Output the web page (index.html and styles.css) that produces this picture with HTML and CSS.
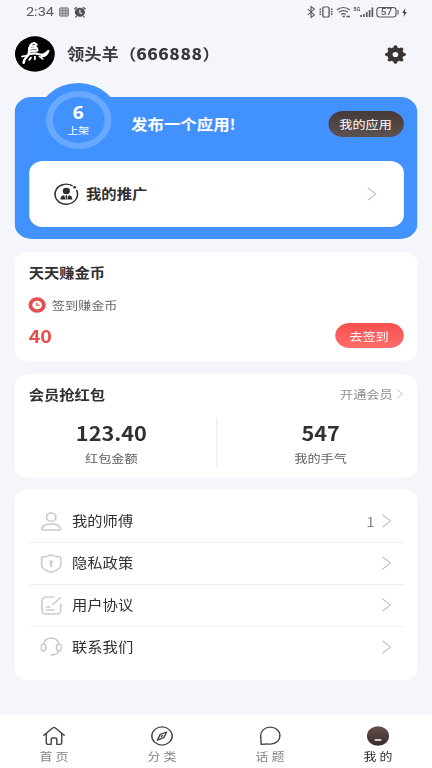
FILE: index.html
```html
<!DOCTYPE html>
<html lang="zh-CN">
<head>
<meta charset="utf-8">
<title>我的</title>
<link rel="stylesheet" href="styles.css">
</head>
<body>
<svg class="defs" width="0" height="0">
  <symbol id="chevron" viewBox="0 0 9 14"><path d="M1 .8 8 7l-7 6.200" fill="none" stroke="currentColor" stroke-width="1"/></symbol>
</svg>
<div class="app">
  <header class="status">
    <span class="time">2:34</span>
    <svg class="status-left" viewBox="0 0 25 12" width="25" height="12">
      <rect x=".8" y="1.800" width="8" height="8.400" rx="1" fill="#b4b5b9" stroke="#77787c" stroke-width=".8"/>
      <path d="M1 4.500h8M1 7.300h8M3.600 2v8M6.300 2v8" stroke="#77787c" stroke-width=".6"/>
      <circle cx="19" cy="6.300" r="4.500" fill="#515256"/>
      <path d="M14 3.200 16.200 1.200M24 3.200l-2.200-2M16 10.200l-1 1.300M22 10.200l1 1.300" stroke="#515256" stroke-width="1.200"/>
      <path d="M19 3.800v2.800l1.800 1.100" fill="none" stroke="#f4f6fb" stroke-width="1"/>
    </svg>
    <svg class="status-right" viewBox="0 0 90 14" width="90" height="14" fill="none" stroke="#58595d">
      <path d="m1.500 4 6 6L4.500 12.500V1.500l3 2.500-6 6" stroke-width="1"/>
      <rect x="15" y="2" width="5.500" height="10" rx="1" stroke-width="1.200"/>
      <path d="M12.700 3.500v7M22.800 3.500v7" stroke-width="1.400" stroke-dasharray="1.500 1"/>
      <path d="M27.500 5c3.500-3.200 8-3.200 11.500 0M29.300 7.300c2.500-2 5.400-2 7.900 0M31.200 9.500c1.300-1 3-1 4.200 0" stroke-width="1.200"/>
      <path d="M32.500 11.500h2M36 11.500h3" stroke-width="1.400"/>
      <path d="M49 12v-2M51.500 12V9M54 12V7M56.500 12V5M59 12V2.500" stroke-width="1.500"/>
      <text x="42" y="6" class="sig">5G</text>
      <rect x="63" y="2.500" width="17" height="9.500" rx="2.500" stroke-width="1"/>
      <path d="M81.800 5v4.500" stroke-width="1"/>
      <text x="71.500" y="10.400" text-anchor="middle" class="bat">57</text>
      <path d="m88.500 3-3 5h1.800L86.500 12l3.200-5h-1.800z" fill="#414246" stroke="none"/>
    </svg>
  </header>

  <div class="profile">
    <svg class="avatar" viewBox="0 0 36 36" width="36" height="36">
      <circle cx="18" cy="18" r="17.700" fill="#000"/>
      <g fill="none" stroke="#fff" stroke-linecap="round" stroke-linejoin="round">
        <path d="M13.500 12c0-3 1.500-4.500 4-5l2 1.500-1.500 3 2 1M14 10.500l4-.5M13.500 13l6-1M13.500 15.500l7-1" stroke-width="2"/>
        <path d="M13 12c0 3 .5 5-1.500 8-2 2-3.500 4-3.500 7M12 18.500c4-1 6-2 9-.5 4 1.500 6 0 9-3-1 3-3 5.500-6 5.500" stroke-width="2.200"/>
        <path d="M6.500 20.500c2-.3 4-.5 6-1.500M14.500 21.500l-1.500 2.500M18 20.500v3M22 20.500l3 2.500" stroke-width="1.600"/>
      </g>
    </svg>
    <h1>领头羊（<b>666888</b>）</h1>
    <svg class="gear" viewBox="0 0 20 20" width="19" height="19">
      <circle cx="10" cy="10" r="5.200" fill="none" stroke="#3c3432" stroke-width="5"/>
      <path d="M10 2.100v.1M10 17.800v.1M2.100 10h.1M17.800 10h.1M4.500 4.500h.1M15.500 4.500h.1M4.500 15.500h.1M15.500 15.500h.1" stroke="#3c3432" stroke-width="3.800" stroke-linecap="round"/>
    </svg>
  </div>

  <section class="hero">
    <div class="badge"><div class="ring"><strong>6</strong><span>上架</span></div></div>
    <div class="hero-top">
      <h2>发布一个应用!</h2>
      <button class="btn dark">我的应用</button>
    </div>
    <div class="promo">
      <svg viewBox="0 0 22 22" width="22" height="22">
        <path d="M16 2.600A10 10 0 1 0 20.200 7.500" fill="none" stroke="#2e2e2e" stroke-width="1.400" stroke-linecap="round"/>
        <circle cx="18.300" cy="4.300" r="1.200" fill="#2e2e2e"/>
        <circle cx="11" cy="8" r="3.200" fill="#2e2e2e"/>
        <path d="M5.600 16.500c0-3 1.700-4.200 3.400-4.300l1.200 4.300zM16.400 16.500c0-3-1.700-4.200-3.400-4.300l-1.200 4.300zM11 12l.9 1-.4 3.500h-1l-.4-3.500z" fill="#2e2e2e"/>
      </svg>
      <span>我的推广</span>
      <svg class="chev" width="9" height="14"><use href="#chevron"/></svg>
    </div>
  </section>

  <section class="card coins">
    <h3>天天赚金币</h3>
    <div class="task">
      <svg viewBox="0 0 16 16" width="16" height="16">
        <circle cx="8" cy="8" r="6" fill="#fff" stroke="#e4504f" stroke-width="3.400"/>
        <path d="M7.700 5.400v2.800h2.600" fill="none" stroke="#e4504f" stroke-width="1.100"/>
      </svg>
      <span>签到赚金币</span>
    </div>
    <div class="coin-row"><strong>40</strong><button class="btn red">去签到</button></div>
  </section>

  <section class="card member">
    <div class="member-head"><h3>会员抢红包</h3><span class="more">开通会员<svg width="6.500" height="10"><use href="#chevron"/></svg></span></div>
    <div class="stats">
      <div class="stat"><strong>123.40</strong><span>红包金额</span></div>
      <div class="stat"><strong>547</strong><span>我的手气</span></div>
    </div>
  </section>

  <section class="card menu">
    <div class="row">
      <svg class="icon" viewBox="0 0 20 20"><circle cx="10" cy="5.400" r="4.400"/><path d="M2.800 19h14.400c1.200 0 1.800-.6 1.600-1.700C18.200 14.500 14.500 12.700 10 12.700S1.800 14.500 1.200 17.300C1 18.400 1.600 19 2.800 19z"/></svg>
      <span>我的师傅</span><em>1</em><svg class="chev" width="9" height="14"><use href="#chevron"/></svg>
    </div>
    <div class="row">
      <svg class="icon" viewBox="0 0 20 20"><path d="M10 .9C7.500 2.200 4.500 3 1.800 3.100c-.6 0-.8.3-.8.900v7c0 4 5 7 9 8.300 4-1.300 9-4.300 9-8.300V4c0-.6-.2-.9-.8-.9C15.500 3 12.500 2.200 10 .9z"/><path d="M10 8v5M9 7.700h2" stroke-width="1.800"/></svg>
      <span>隐私政策</span><svg class="chev" width="9" height="14"><use href="#chevron"/></svg>
    </div>
    <div class="row">
      <svg class="icon" viewBox="0 0 20 20"><path d="M12.500 1.200H5a3.600 3.600 0 0 0-3.600 3.600v10.500A3.600 3.600 0 0 0 5 18.900h10.300a3.600 3.600 0 0 0 3.600-3.600V9M18.600 1.800 11.300 9M5.700 11.500h3M5.700 14.800h7"/></svg>
      <span>用户协议</span><svg class="chev" width="9" height="14"><use href="#chevron"/></svg>
    </div>
    <div class="row">
      <svg class="icon" viewBox="0 0 20 20"><path d="M2.800 7.500C3.500 3.500 6.500 1 10 1s6.500 2.500 7.200 6.500M17.200 14.500c-.8 2.600-2.700 4-5.700 4.200"/><rect x=".5" y="7.500" width="4.500" height="7" rx="2.200"/><rect x="15" y="7.500" width="4.500" height="7" rx="2.200"/><path d="M10.500 18.700h1" stroke-width="2"/></svg>
      <span>联系我们</span><svg class="chev" width="9" height="14"><use href="#chevron"/></svg>
    </div>
  </section>

  <nav class="tabs">
    <a><svg viewBox="0 0 21 21"><path d="M1 9.700 9.200 2c.8-.8 1.800-.8 2.600 0L20 9.700M3.300 8v9.300c0 1.200.8 2 2 2h2.600v-5.500c0-.8.4-1.200 1.100-1.200h3c.7 0 1.100.4 1.100 1.200v5.500h2.600c1.200 0 2-.8 2-2V8"/></svg><span>首 页</span></a>
    <a><svg viewBox="0 0 21 21"><circle cx="10.500" cy="10.500" r="9.500"/><path d="m14.800 6.300-2.600 6-6 2.600 2.600-6z"/><path d="m10 11 1-1"/></svg><span>分 类</span></a>
    <a><svg viewBox="0 0 21 21"><path d="M2.300 19.300 1.800 10.200A9 9 0 1 1 11 19.100Q7 18.600 2.300 19.300z"/></svg><span>话 题</span></a>
    <a class="active"><svg viewBox="0 0 21 21"><defs><linearGradient id="me" x2="0" y2="1"><stop stop-color="#65514f"/><stop offset="1" stop-color="#382b2b"/></linearGradient></defs><circle cx="10.500" cy="10.500" r="10.300" fill="url(#me)" stroke="none"/><path d="M8 14.700h5" stroke="#fff" stroke-width="1.700"/></svg><span>我 的</span></a>
  </nav>
</div>
</body>
</html>
```
FILE: styles.css
```css
* { box-sizing: border-box; }
html, body { margin: 0; height: 100%; overflow: hidden; background: #f5f6fb; }
h1, h2, h3 { margin: 0; }
.defs { display: block; position: absolute; }
svg { display: block; flex: none; }

/* 384px wide layout, widened to fill the 432px screen */
.app {
  width: 384px;
  height: 768px;
  transform: scaleX(1.125);
  transform-origin: 0 0;
  display: flex;
  flex-direction: column;
  font-family: "Noto Sans CJK SC", sans-serif;
  font-size: 13.600px;
  line-height: 20px;
  color: #303030;
}

.status { height: 24px; display: flex; align-items: center; padding: 0 22px 0 23px; }
.time { font-family: Roboto, sans-serif; font-size: 13px; width: 29px; color: #5a5b5f; }
.status-right { margin-left: auto; }
.sig { font: 700 5px Roboto, sans-serif; fill: #58595d; stroke: none; }
.bat { font: 500 9px Roboto, sans-serif; fill: #58595d; stroke: none; }

.profile { height: 60px; display: flex; align-items: center; padding: 0 23px 0 13px; }
.profile h1 { margin: -2px 0 0 10.500px; font-size: 15.400px; font-weight: 700; color: #383a3d; }
.profile b { letter-spacing: .45px; }
.gear { margin-left: auto; }

.hero { position: relative; height: 142px; margin: 13px 13px 0; padding: 13px 12.500px 12px; border-radius: 15px; background: #4191fe; display: flex; flex-direction: column; }
.badge { position: absolute; left: 20px; top: -14px; width: 73px; height: 73px; border-radius: 50%; background: #4191fe; padding: 7.500px; }
.ring { width: 58px; height: 58px; border: 6px solid #68a9ff; border-radius: 50%; color: #fff; display: flex; flex-direction: column; align-items: center; padding-top: 7px; }
.ring strong { font-family: "Open Sans", sans-serif; font-size: 17px; line-height: 18px; }
.ring span { margin-top: 1.500px; font-size: 9.600px; line-height: 14px; }
.hero-top { display: flex; align-items: center; justify-content: space-between; height: 27px; padding-left: 91px; }
.hero-top h2 { font-size: 14.600px; color: #fff; }
.btn { border: 0; border-radius: 13px; color: #fff; font-family: inherit; font-size: 11.700px; line-height: 18px; padding: 0; }
.dark { width: 67px; height: 26px; margin-top: 1px; padding-bottom: 1px; background: linear-gradient(#453a38, #5d5151); }
.promo { margin-top: auto; height: 66px; border-radius: 12px; background: #fff; display: flex; align-items: center; padding: 0 23.500px 0 22px; font-weight: 700; }
.promo span { margin: -2px 0 0 7px; }
.chev { margin-left: auto; color: #b9b9b9; }

.card { margin: 0 13px; border-radius: 12px; background: #fff; padding: 0 12.500px; }
.card h3 { font-size: 13.600px; line-height: 20px; }
.coins { margin-top: 12.500px; height: 109px; padding-top: 10.500px; }
.task { display: flex; align-items: center; gap: 5px; height: 20px; margin-top: 13px; font-size: 11.700px; color: #666; }
.task svg { margin-left: -.5px; }
.coin-row { display: flex; align-items: center; justify-content: space-between; margin-top: 7.500px; height: 26px; }
.coin-row strong { margin-top: 1px; font-size: 17.500px; color: #e4504f; }
.red { width: 61px; height: 25px; background: linear-gradient(#f7504f, #ff6d6a); }

.member { margin-top: 13px; height: 104px; padding-top: 10px; }
.member-head { display: flex; justify-content: space-between; align-items: center; }
.more { display: flex; align-items: center; gap: 3px; font-size: 11.700px; color: #8f8f8f; }
.more svg { color: #b4b4b4; }
.stats { display: flex; margin: 14px -19px 0; }
.stat { flex: 1; display: flex; flex-direction: column; align-items: center; padding-top: 3px; height: 48px; }
.stat + .stat { border-left: 1px solid #eee; }
.stat strong { font-size: 19.300px; line-height: 24px; }
.stat span { margin-top: 4px; font-size: 11.700px; line-height: 18px; color: #606060; }

.menu { margin-top: 11px; height: 191px; padding-top: 12.500px; }
.row { height: 41.900px; display: flex; align-items: center; padding: 0 11px 0 10.500px; border-bottom: 1px solid #eee; }
.row:last-child { border-bottom: 0; height: 40px; }
.row span { margin: -2px 0 0 9px; }
.row em { margin: -1px 5.500px 0 auto; font-style: normal; color: #888; }
.row em + .chev { margin-left: 0; }
.icon { width: 19px; height: 19px; fill: none; stroke: #c7c9cd; stroke-width: 1.500; stroke-linecap: round; }

.tabs { margin-top: auto; height: 53px; background: #fff; display: flex; }
.tabs a { flex: 1; display: flex; flex-direction: column; align-items: center; padding-top: 11px; font-size: 11.500px; line-height: 16px; color: #858585; }
.tabs svg { width: 20px; height: 20px; fill: none; stroke: #4a4a4a; stroke-width: 1.400; stroke-linecap: round; stroke-linejoin: round; }
.tabs span { margin-top: 2px; }
.tabs .active { color: #303030; }
```
